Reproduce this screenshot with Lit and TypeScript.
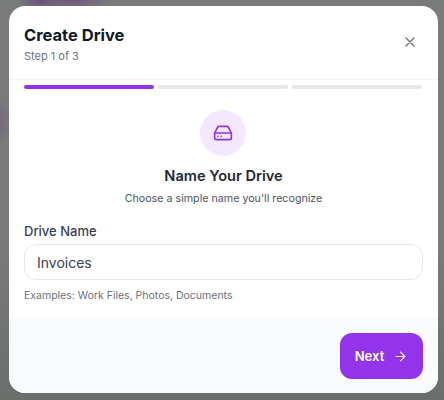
import { LitElement, html, css } from "lit";
import { customElement } from "lit/decorators.js";

@customElement("app-root")
export class AppRoot extends LitElement {
  static styles = css`
    :host { display: block; width: 444px; height: 400px; overflow: hidden; font-family: Inter, "Noto Sans", sans-serif; }
    * { box-sizing: border-box; }
    .page { width: 444px; height: 400px; padding: 6px 6px 7px 9px;
      background:
        radial-gradient(ellipse 22px 14px at 40px 0px, #6d4f7c, transparent),
        radial-gradient(ellipse 40px 12px at 72px 0px, #71577f, transparent),
        radial-gradient(ellipse 12px 24px at 0px 122px, #756a7e, transparent),
        linear-gradient(#797b7a, #797b7a 60%, #6c6e6c); }
    .modal { width: 429px; height: 387px; background: #fff; border-radius: 16px; overflow: hidden; display: flex; flex-direction: column; }
    .head { height: 74px; padding: 16px 15px 0 15px; border-bottom: 1px solid #f3f4f6; display: flex; justify-content: space-between; }
    h2 { margin: 0; font-size: 16.5px; line-height: 26px; font-weight: 700; color: #111827; }
    .sub { margin: 0; font-size: 11px; line-height: 17px; color: #6b7280; }
    .close { width: 16px; height: 16px; margin: 12px 5.5px 0 0; color: #6b7280; }
    .progress { display: flex; gap: 4px; padding: 5px 16px 0 15px; }
    .seg { flex: 1; height: 4px; border-radius: 2px; background: #e5e7eb; }
    .seg.on { background: #9333ea; }
    .body { flex: 1; padding: 21px 15px 0; display: flex; flex-direction: column; }
    .icon { align-self: center; width: 46px; height: 46px; margin-right: 1px; border-radius: 50%; background: #f3e8ff; color: #9333ea; display: flex; align-items: center; justify-content: center; }
    h3 { margin: 10px 0 0; text-align: center; font-size: 14.6px; line-height: 20px; font-weight: 600; color: #1f2937; }
    .desc { margin: 4px 0 0; text-align: center; font-size: 10.7px; line-height: 18px; color: #4b5563; }
    label { margin-top: 13px; font-size: 13px; line-height: 20px; font-weight: 500; color: #374151; }
    .input { margin-top: 3px; height: 36px; border: 1px solid #e5e7eb; border-radius: 12px; padding: 0 12px; display: flex; align-items: center; font-size: 14px; color: #374151; }
    .hint { margin: 8px 0 0; font-size: 10.5px; line-height: 16px; color: #6b7280; }
    .foot { height: 75px; background: #f9fafb; padding: 15px 15px 0 0; display: flex; justify-content: flex-end; }
    .next { width: 83px; height: 46px; border-radius: 12px; background: #9333ea; color: #fff; font-size: 13px; font-weight: 600; display: flex; align-items: center; justify-content: center; gap: 9px; }
  `;
  render() {
    return html`<div class="page"><div class="modal">
      <div class="head">
        <div><h2>Create Drive</h2><p class="sub">Step 1 of 3</p></div>
        <svg class="close" viewBox="0 0 24 24" fill="none" stroke="currentColor" stroke-width="2" stroke-linecap="round"><path d="M6 6l12 12M18 6L6 18"/></svg>
      </div>
      <div class="progress"><div class="seg on"></div><div class="seg"></div><div class="seg"></div></div>
      <div class="body">
        <div class="icon"><svg width="20" height="20" viewBox="0 0 24 24" fill="none" stroke="currentColor" stroke-width="2" stroke-linecap="round" stroke-linejoin="round"><path d="M22 12H2"/><path d="M5.45 5.11L2 12v6a2 2 0 0 0 2 2h16a2 2 0 0 0 2-2v-6l-3.45-6.89A2 2 0 0 0 16.76 4H7.24a2 2 0 0 0-1.79 1.11z"/><path d="M6 16h.01M10 16h.01"/></svg></div>
        <h3>Name Your Drive</h3>
        <p class="desc">Choose a simple name you'll recognize</p>
        <label>Drive Name</label>
        <div class="input">Invoices</div>
        <p class="hint">Examples: Work Files, Photos, Documents</p>
      </div>
      <div class="foot"><div class="next">Next <svg width="15" height="15" viewBox="0 0 24 24" fill="none" stroke="currentColor" stroke-width="1.75" stroke-linecap="round" stroke-linejoin="round"><path d="M5 12h14M12 5l7 7-7 7"/></svg></div></div>
    </div></div>`;
  }
}
